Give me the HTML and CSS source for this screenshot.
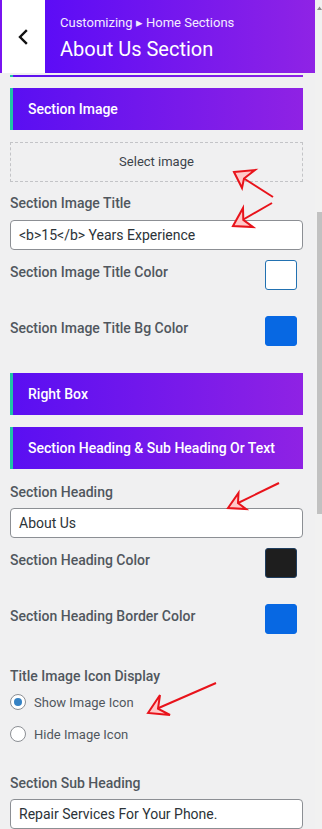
FILE: index.html
```html
<!DOCTYPE html>
<html>
<head>
<meta charset="utf-8">
<link rel="stylesheet" href="styles.css">
</head>
<body>
<div class="frame">
  <div class="pane">
    <div class="head">
      <div class="strip"></div>
      <div class="back">
        <svg width="12" height="16" viewBox="0 0 12 16"><path d="M9 2 L3 8 L9 14" fill="none" stroke="#111" stroke-width="2.4" stroke-linecap="square"/></svg>
      </div>
      <div class="titles">
        <div class="crumb">Customizing ▸ Home Sections</div>
        <div class="title">About Us Section</div>
      </div>
    </div>
    <div class="content">
      <div class="clip"></div>
      <div class="bar bar-first">Section Image</div>
      <div class="select">Select image</div>
      <div class="label label-a">Section Image Title</div>
      <div class="input input-a">&lt;b&gt;15&lt;/b&gt; Years Experience</div>
      <div class="crow crow-first">
        <div class="clabel">Section Image Title Color</div>
        <div class="swatch sw-white"></div>
      </div>
      <div class="crow">
        <div class="clabel">Section Image Title Bg Color</div>
        <div class="swatch sw-blue"></div>
      </div>
      <div class="bar bar-right">Right Box</div>
      <div class="bar bar-next">Section Heading &amp; Sub Heading Or Text</div>
      <div class="label label-b">Section Heading</div>
      <div class="input input-b">About Us</div>
      <div class="crow crow-first">
        <div class="clabel">Section Heading Color</div>
        <div class="swatch sw-black"></div>
      </div>
      <div class="crow">
        <div class="clabel">Section Heading Border Color</div>
        <div class="swatch sw-blue"></div>
      </div>
      <div class="label label-c">Title Image Icon Display</div>
      <div class="radio radio-first"><span class="dot on"></span><span>Show Image Icon</span></div>
      <div class="radio"><span class="dot"></span><span>Hide Image Icon</span></div>
      <div class="label label-d">Section Sub Heading</div>
      <div class="input input-b">Repair Services For Your Phone.</div>
    </div>
  </div>
  <div class="scroll">
    <svg class="sarrow" width="7" height="6" viewBox="0 0 7 6"><path d="M1 5 L3.5 1.5 L6 5 Z" fill="#8a8a8a"/></svg>
    <div class="thumb"></div>
  </div>
</div>
<svg class="notes" width="322" height="829" viewBox="0 0 322 829">
  <g stroke="#e8131b" stroke-width="2" fill="#ffc9c9" stroke-linejoin="miter">
    <line x1="273" y1="197" x2="240" y2="176"/>
    <polygon points="234,172 255,170 244,178.5 242,188"/>
    <line x1="272" y1="203" x2="239" y2="222"/>
    <polygon points="233,226 243,208 243.3,219.9 253,227"/>
    <line x1="279" y1="483" x2="234" y2="505"/>
    <polygon points="228,508 238.5,493 238,503 246,509"/>
    <line x1="216" y1="683" x2="154" y2="710"/>
    <polygon points="148,713 160,695 158,708.6 170,715"/>
  </g>
</svg>
</body>
</html>
```

FILE: styles.css
```css
* { box-sizing: border-box; }
html, body {
  margin: 0;
  padding: 0;
  width: 322px;
  height: 829px;
  overflow: hidden;
  background: #f0f0f1;
  font-family: Roboto, "Liberation Sans", sans-serif;
}
.frame {
  display: flex;
  height: 829px;
}
.pane {
  width: 315px;
  flex: none;
  display: flex;
  flex-direction: column;
}
.scroll {
  width: 7px;
  flex: none;
  padding-left: 2px;
  background: #f1f1f1;
  display: flex;
  flex-direction: column;
}
.sarrow { margin-top: 5px; margin-left: -1px; }
.thumb {
  margin-top: 201px;
  width: 5px;
  height: 302px;
  background: #c1c1c1;
}
.head {
  display: flex;
  height: 73px;
  flex: none;
}
.strip { width: 2px; background: #7814f0; }
.back {
  width: 43px;
  background: #ffffff;
  display: flex;
  align-items: center;
  padding-left: 15px;
  padding-top: 1px;
}
.titles {
  flex: 1;
  background: linear-gradient(90deg, #5c0cf6, #8f23e5);
  padding-left: 15px;
  color: #fff;
}
.crumb {
  font-size: 13px;
  line-height: 16px;
  margin-top: 15px;
  color: #f3ecff;
}
.title {
  font-size: 20px;
  line-height: 24px;
  margin-top: 6px;
}
.content {
  padding: 0 12px 0 10px;
  display: flex;
  flex-direction: column;
}
.clip {
  margin-top: 2px;
  height: 2px;
  background: linear-gradient(90deg, #5b10f0, #8e22e4);
  border-left: 3px solid #1fc4a6;
}
.bar {
  height: 42px;
  background: linear-gradient(90deg, #5a0ff2, #8f22e4);
  border-left: 3px solid #1fc4a6;
  color: #fff;
  font-size: 14px;
  font-weight: 500;
  display: flex;
  align-items: center;
  padding-left: 15px;
  padding-bottom: 1px;
}
.bar-first { margin-top: 11px; }
.bar-right { margin-top: 27px; }
.bar-next { margin-top: 12px; }
.select {
  margin-top: 12px;
  height: 40px;
  border: 1px dashed #c3c4c7;
  color: #3c434a;
  font-size: 13px;
  display: flex;
  align-items: center;
  justify-content: center;
  padding-bottom: 2px;
}
.label {
  font-size: 14px;
  font-weight: 500;
  line-height: 20px;
  color: #50575e;
}
.label-a { margin-top: 11px; margin-bottom: 7px; }
.label-b { margin-top: 13px; margin-bottom: 6px; }
.label-c { margin-top: 32px; }
.label-d { margin-top: 29px; margin-bottom: 6px; }
.input {
  height: 30px;
  background: #fff;
  border: 1px solid #8c8f94;
  border-radius: 4px;
  font-size: 14px;
  color: #2c3338;
  padding-left: 8px;
  display: flex;
  align-items: center;
  flex: none;
}
.crow {
  display: flex;
  justify-content: space-between;
  margin-top: 26px;
  padding-right: 6px;
}
.crow-first { margin-top: 10px; }
.clabel {
  font-size: 14px;
  font-weight: 500;
  line-height: 20px;
  color: #50575e;
  margin-top: 2px;
}
.swatch {
  width: 32px;
  height: 30px;
  border-radius: 3px;
  border: 1px solid #2271b1;
}
.sw-white { background: #ffffff; }
.sw-blue { background: #0768e3; border-color: #0768e3; }
.sw-black { background: #1e1e1e; border-color: #1f3d5e; }
.radio {
  display: flex;
  align-items: center;
  height: 20px;
  margin-top: 12px;
  font-size: 13px;
  color: #50575e;
}
.radio-first { margin-top: 6px; }
.dot {
  width: 16px;
  height: 16px;
  border: 1px solid #8c8f94;
  border-radius: 50%;
  background: #fff;
  margin-right: 8px;
  display: flex;
  align-items: center;
  justify-content: center;
}
.dot.on::after {
  content: "";
  width: 8px;
  height: 8px;
  border-radius: 50%;
  background: #3582c4;
}
.notes {
  position: absolute;
  left: 0;
  top: 0;
  pointer-events: none;
}
```
